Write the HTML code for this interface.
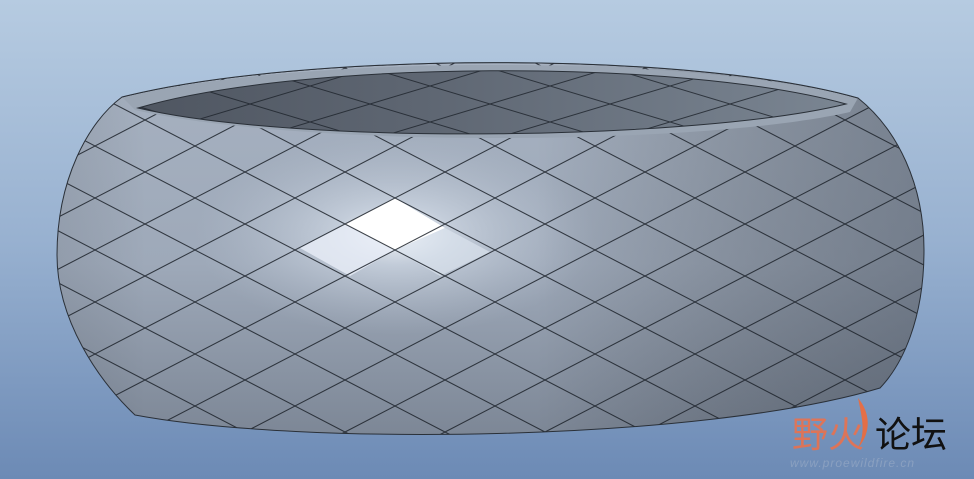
<!DOCTYPE html>
<html><head><meta charset="utf-8"><style>
html,body{margin:0;padding:0;width:974px;height:479px;overflow:hidden}
svg{display:block}
</style></head><body>
<svg width="974" height="479" viewBox="0 0 974 479" xmlns="http://www.w3.org/2000/svg">
<defs>
<linearGradient id="bg" x1="0" y1="0" x2="0" y2="1">
<stop offset="0" stop-color="#b6cbe1"/><stop offset="0.5" stop-color="#98b1d0"/><stop offset="1" stop-color="#6c8ab5"/>
</linearGradient>
<linearGradient id="body" x1="0" y1="0" x2="0" y2="1">
<stop offset="0" stop-color="#a9b4c3"/><stop offset="0.55" stop-color="#9ea9b9"/><stop offset="1" stop-color="#747e8d"/>
</linearGradient>
<radialGradient id="hl" cx="395" cy="235" r="200" gradientUnits="userSpaceOnUse" gradientTransform="translate(395 235) scale(1 0.5) translate(-395 -235)">
<stop offset="0" stop-color="#ffffff" stop-opacity="0.9"/><stop offset="0.3" stop-color="#e6eef8" stop-opacity="0.5"/><stop offset="1" stop-color="#c0cad8" stop-opacity="0"/>
</radialGradient>
<linearGradient id="sideR" x1="0" y1="0" x2="1" y2="0">
<stop offset="0.55" stop-color="#000" stop-opacity="0"/><stop offset="1" stop-color="#2a3340" stop-opacity="0.4"/>
</linearGradient>
<linearGradient id="sideL" x1="0" y1="0" x2="1" y2="0">
<stop offset="0" stop-color="#2a3340" stop-opacity="0.15"/><stop offset="0.15" stop-color="#000" stop-opacity="0"/>
</linearGradient>
<linearGradient id="inner" x1="0" y1="0" x2="1" y2="0">
<stop offset="0" stop-color="#4f5661"/><stop offset="0.4" stop-color="#5e6672"/><stop offset="1" stop-color="#7a8592"/>
</linearGradient>
<pattern id="grid" width="100" height="52" patternUnits="userSpaceOnUse" patternTransform="translate(345 198)">
<path d="M0,26 L50,0 L100,26 L50,52 Z" stroke="#1d232b" stroke-width="1" fill="none"/>
</pattern>
<pattern id="grid2" width="120" height="36" patternUnits="userSpaceOnUse" patternTransform="translate(430 68)">
<path d="M0,18 L60,0 L120,18 L60,36 Z" stroke="#1d232b" stroke-width="1" fill="none"/>
</pattern>
<clipPath id="bc"><path d="M122,97 C300,52 690,50 858,98 C898,130 924,185 924,250 C924,320 902,365 880,388 C700,442 300,446 135,415 C98,380 57,320 57,255 C57,180 88,122 122,97 Z"/></clipPath>
</defs>
<rect width="974" height="479" fill="url(#bg)"/>
<g clip-path="url(#bc)">
<rect width="974" height="479" fill="url(#body)"/>
<rect width="974" height="479" fill="url(#hl)"/>
<path d="M345,224 L395,198 L445,228 L395,250 Z" fill="#ffffff"/>
<path d="M300,248 L345,224 L395,250 L350,276 Z" fill="#e8eef8" opacity="0.8"/>
<path d="M395,250 L445,228 L490,252 L440,276 Z" fill="#dfe7f2" opacity="0.6"/>
<rect width="974" height="479" fill="url(#sideR)"/>
<rect width="974" height="479" fill="url(#sideL)"/>
<rect width="974" height="479" fill="url(#grid)" opacity="0.85"/>
<path d="M122,97 C300,55 690,53 858,98 L850,112 C700,146 300,148 135,110 Z" fill="#9aa5b3"/>
<path d="M138,108 C300,60 680,58 846,104 C700,140 300,146 138,108 Z" fill="url(#inner)"/>
<path d="M138,108 C300,60 680,58 846,104 C700,140 300,146 138,108 Z" fill="url(#grid2)" opacity="0.8"/>
<path d="M122,97 C300,52 690,50 858,98" stroke="#2a3038" stroke-width="1" fill="none"/>
<path d="M138,108 C300,60 680,58 846,104 C700,140 300,146 138,108 Z" stroke="#2a3038" stroke-width="1" fill="none"/>
</g>
<path d="M122,97 C300,52 690,50 858,98 C898,130 924,185 924,250 C924,320 902,365 880,388 C700,442 300,446 135,415 C98,380 57,320 57,255 C57,180 88,122 122,97 Z" stroke="#2a3038" stroke-width="1" fill="none"/>
<path d="M858,398 C870,412 872,432 858,448 C866,432 862,418 858,398Z" fill="#f06a3a" opacity="0.9"/>
<text x="792" y="447" font-family="'Liberation Sans','Noto Sans CJK SC',sans-serif" font-size="36" fill="#f07048" opacity="0.85">野火</text>
<text x="875" y="447" font-family="'Liberation Sans','Noto Sans CJK SC',sans-serif" font-size="36" fill="#111">论坛</text>
<text x="790" y="467" font-family="'Liberation Sans',sans-serif" font-size="12" font-style="italic" fill="#8aa0c0" letter-spacing="1">www.proewildfire.cn</text>
</svg>
</body></html>
